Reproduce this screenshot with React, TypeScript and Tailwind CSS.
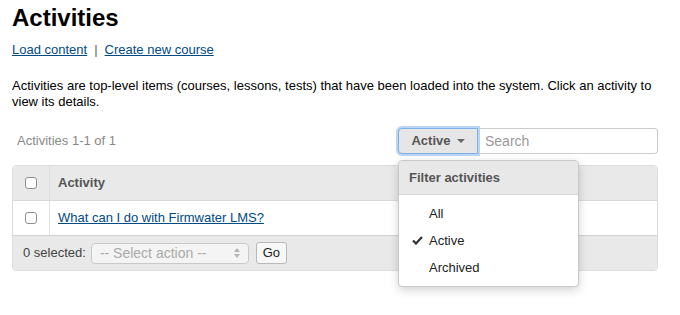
import React from 'react';

const Box = () => (
  <span className="inline-block w-[12px] h-[12px] rounded-[3px] border border-[#8f8f8f] bg-white" />
);

const App = () => {
  const filters = [
    { label: 'All', checked: false },
    { label: 'Active', checked: true },
    { label: 'Archived', checked: false },
  ];

  return (
    <div className="w-[680px] h-[315px] bg-white pl-3 pr-[22px] pt-[3px] text-[13px] text-black overflow-hidden" style={{ fontFamily: '"Liberation Sans", Arial, sans-serif' }}>
      <h1 className="text-[24px] font-bold leading-[29px]">Activities</h1>

      <div className="mt-[10px] flex items-center leading-[16px]">
        <a className="text-[#004a82] underline">Load content</a>
        <span className="mx-[7px] text-[#666]">|</span>
        <a className="text-[#004a82] underline">Create new course</a>
      </div>

      <p className="mt-[20px] leading-[16px] w-[656px]">
        Activities are top-level items (courses, lessons, tests) that have been loaded into the system. Click an activity to view its details.
      </p>

      <div className="mt-[18px] flex items-center justify-between">
        <span className="pl-[5px] text-[#888]">Activities 1-1 of 1</span>
        <div className="relative flex h-[26px]">
          <button className="w-[80px] h-[26px] rounded-l-[4px] border border-[#7fb0e8] bg-[#e6e6e6] shadow-[0_0_0_2px_rgba(102,160,233,0.45)] flex items-center justify-center gap-[6px] font-bold text-[#555]">
            Active
            <svg width="8" height="5" viewBox="0 0 8 5"><path d="M0 0h8L4 4z" fill="#666" /></svg>
          </button>
          <input
            placeholder="Search"
            className="w-[180px] h-[26px] rounded-r-[4px] border border-l-0 border-[#ccc] px-[7px] text-[14px] placeholder-[#999] outline-none"
          />

          <div className="absolute left-0 top-[32px] z-10 w-[181px] rounded-[4px] border border-[#c8c8c8] bg-white shadow-[0_3px_10px_rgba(0,0,0,0.18)] overflow-hidden">
            <div className="h-[34px] bg-[#e8e8e8] border-b border-[#d6d6d6] flex items-center pl-[10px] font-bold text-[#555]">
              Filter activities
            </div>
            <div className="py-[5px]">
              {filters.map((f) => (
                <div key={f.label} className="h-[27px] flex items-center text-[#222]">
                  <span className="w-[30px] flex justify-end pr-[6px]">
                    {f.checked && (
                      <svg width="11" height="9" viewBox="0 0 11 9"><path d="M1 4.5l3 3L10 1" stroke="#333" strokeWidth="2.2" fill="none" /></svg>
                    )}
                  </span>
                  {f.label}
                </div>
              ))}
            </div>
          </div>
        </div>
      </div>

      <div className="mt-[11px] w-[646px] rounded-[4px] border border-[#dcdcdc] overflow-hidden">
        <div className="h-[35px] bg-[#e9e9e9] flex border-b border-[#d9d9d9]">
          <div className="w-[37px] flex items-center justify-center border-r border-[#dcdcdc]"><Box /></div>
          <div className="flex-1 flex items-center pl-[8px] font-bold text-[#555]">Activity</div>
          <div className="w-[160px] flex items-center font-bold text-[#555]">Type</div>
        </div>
        <div className="h-[35px] bg-white flex border-b border-[#d0d0d0]">
          <div className="w-[37px] flex items-center justify-center border-r border-[#e4e4e4]"><Box /></div>
          <div className="flex-1 flex items-center pl-[8px]">
            <a className="text-[#004a82] underline">What can I do with Firmwater LMS?</a>
          </div>
          <div className="w-[160px] flex items-center text-[#333]">Course</div>
        </div>
        <div className="h-[34px] bg-[#e9e9e9] flex items-center pl-[10px] gap-[4px] text-[#444]">
          <span>0 selected:</span>
          <div className="ml-[1px] w-[158px] h-[21px] rounded-[4px] border border-[#c9c9c9] bg-[#f4f4f4] flex items-center justify-between px-[8px] text-[#aaa] text-[14px]">
            <span>-- Select action --</span>
            <svg width="6" height="10" viewBox="0 0 6 10"><path d="M0 4L3 0l3 4zM0 6l3 4 3-4z" fill="#b5b5b5" /></svg>
          </div>
          <button className="ml-[3px] w-[31px] h-[22px] rounded-[3px] border border-[#b9b9b9] bg-[#f7f7f7] text-[#222] flex items-center justify-center">Go</button>
        </div>
      </div>
    </div>
  );
};

export default App;
